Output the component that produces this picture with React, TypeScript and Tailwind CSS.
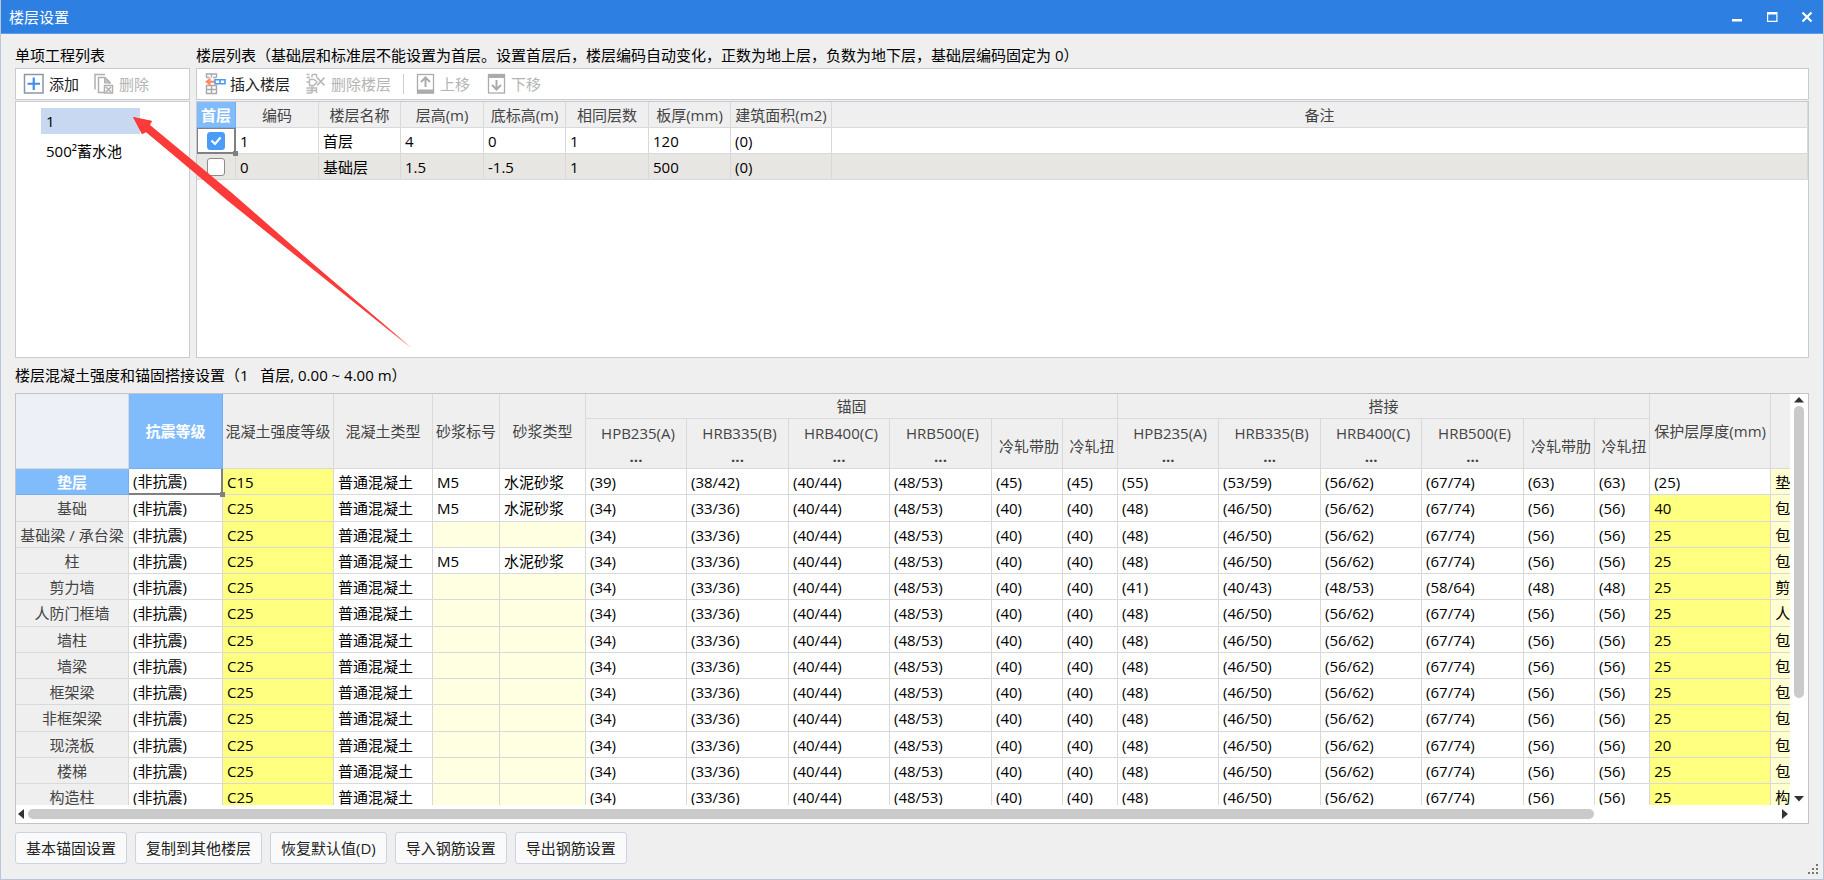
import React, { useState } from "react";

const BASE = {
  anchor: ["(34)", "(33/36)", "(40/44)", "(48/53)", "(40)", "(40)"],
  lap: ["(48)", "(46/50)", "(56/62)", "(67/74)", "(56)", "(56)"],
};

interface ComponentRow {
  name: string;
  grade?: string;
  mortar?: boolean;
  anchor?: string[];
  lap?: string[];
  cover?: string;
  note: string;
}

const ROWS: ComponentRow[] = [
  {
    name: "垫层",
    grade: "C15",
    mortar: true,
    anchor: ["(39)", "(38/42)", "(40/44)", "(48/53)", "(45)", "(45)"],
    lap: ["(55)", "(53/59)", "(56/62)", "(67/74)", "(63)", "(63)"],
    cover: "(25)",
    note: "垫层",
  },
  { name: "基础", mortar: true, cover: "40", note: "包含" },
  { name: "基础梁 / 承台梁", note: "包含" },
  { name: "柱", mortar: true, note: "包含" },
  {
    name: "剪力墙",
    lap: ["(41)", "(40/43)", "(48/53)", "(58/64)", "(48)", "(48)"],
    note: "剪力",
  },
  { name: "人防门框墙", note: "人防" },
  { name: "墙柱", note: "包含" },
  { name: "墙梁", note: "包含" },
  { name: "框架梁", note: "包含" },
  { name: "非框架梁", note: "包含" },
  { name: "现浇板", cover: "20", note: "包含" },
  { name: "楼梯", note: "包含" },
  { name: "构造柱", note: "构造" },
];

const FLOORS = [
  { code: "1", name: "首层", height: "4", bottom: "0", same: "1", slab: "120", area: "(0)" },
  { code: "0", name: "基础层", height: "1.5", bottom: "-1.5", same: "1", slab: "500", area: "(0)" },
];

const BARS = ["HPB235(A)", "HRB335(B)", "HRB400(C)", "HRB500(E)"];

const cell = "border-r border-b p-0";
const th = `${cell} border-[#d9d9d9] bg-[#efefef] font-normal text-[#444]`;
const thActive = `${cell} border-[#74aeee] bg-[#80bbfb] font-bold text-white`;
const td = "border-r border-b border-[#d9d9d9] py-0 pr-0 pl-1";

function ToolButton({
  icon,
  label,
  disabled,
}: {
  icon: React.ReactNode;
  label: string;
  disabled?: boolean;
}) {
  return (
    <button
      disabled={disabled}
      className="flex items-center gap-1 text-[#222] disabled:text-[#b4b4b4]"
    >
      {icon}
      {label}
    </button>
  );
}

const AddIcon = () => (
  <svg width="22" height="22" viewBox="0 0 22 22" fill="none">
    <rect x="1.5" y="1.5" width="18.500" height="18.500" stroke="#8a97a6" strokeWidth="1.5" />
    <path d="M10.750 4.500v12.500M4.500 10.750h12.500" stroke="#3f8fe8" strokeWidth="2.200" />
  </svg>
);

const RemoveIcon = () => (
  <svg width="22" height="22" viewBox="0 0 22 22" fill="none" stroke="#b0b0b0" strokeWidth="1.500">
    <path d="M2 16.500V1.500h10" />
    <path d="M11 19.500H5.500V4.500H12l5 5V11" />
    <path d="M11.500 4v6H17z" fill="#c4c4c4" strokeWidth="1" />
    <rect x="11.500" y="12.500" width="8" height="7.500" />
    <path d="M13 14l5 5M18 14l-5 5" />
  </svg>
);

const InsertFloorIcon = () => (
  <svg width="22" height="22" viewBox="0 0 22 22" fill="none">
    <path
      d="M2.500 4.500v-3.500h10v3.500M2.500 4.500h3M9 4.500h3.500M7.500 1v3.500M2.500 12.500h10v8h-10zM2.500 16.500h10M7.500 12.500v8"
      stroke="#a8a8a8"
      strokeWidth="1.400"
    />
    <path d="M4 8.750h6.500" stroke="#ff8a60" strokeWidth="2.200" />
    <path d="M6.500 4.500L1 8.750l5.500 4.250z" fill="#ff8a60" />
    <path d="M11 6.750h10v4H11zM16 6.750v4" stroke="#4a9bf0" strokeWidth="1.600" />
  </svg>
);

const DeleteFloorIcon = () => (
  <svg width="22" height="22" viewBox="0 0 22 22" fill="none" stroke="#b8b8b8" strokeWidth="1.400">
    <path d="M1.500 1.500h3M7 1.500h4.500v3M1.500 4.500H5M7 1.500v3" />
    <path d="M4.500 6.500h4.500l3 2.500-3 3.500H4.500zM1.500 9h3" />
    <path d="M1.500 15h10v5M1.500 20h5M7 13v7.500M1.500 17.500h10" />
    <path d="M12 4.500l7.500 8M19.500 4.500l-7.500 8" strokeWidth="1.800" />
  </svg>
);

const MoveIcon = ({ down }: { down?: boolean }) => (
  <svg width="20" height="22" viewBox="0 0 20 22" fill="none" stroke="#ababab">
    <rect x="1.500" y="1.500" width="16" height="18.500" strokeWidth="1.300" />
    {down ? (
      <>
        <path d="M1 1h17v4H1z" fill="#ababab" stroke="none" />
        <path d="M9.500 7v9.500M5 12l4.500 4.500 4.500-4.500" strokeWidth="2" />
      </>
    ) : (
      <>
        <path d="M1 16.500h17v4H1z" fill="#ababab" stroke="none" />
        <path d="M9.500 14V4.500M5 9l4.500-4.500L14 9" strokeWidth="2" />
      </>
    )}
  </svg>
);

function TitleBar() {
  const btn = "flex h-6 w-6 items-center justify-center";
  return (
    <header className="flex h-[34px] shrink-0 items-center justify-between border-b border-[#5b9bea] bg-[#2d7fe2] pr-1 pl-2 text-white">
      <h1>楼层设置</h1>
      <div className="flex gap-[11px]">
        <button aria-label="最小化" className={btn}>
          <svg width="12" height="12" viewBox="0 0 12 12">
            <path d="M1 8h10v2.500H1z" fill="#fff" />
          </svg>
        </button>
        <button aria-label="最大化" className={btn}>
          <svg width="12" height="12" viewBox="0 0 12 12">
            <path d="M1 1h10.500v10H1zM2.200 3.500v6.300h8.100V3.500z" fill="#fff" fillRule="evenodd" />
          </svg>
        </button>
        <button aria-label="关闭" className={btn}>
          <svg width="12" height="12" viewBox="0 0 12 12">
            <path d="M1.500 1.500l9 9M10.500 1.500l-9 9" stroke="#fff" strokeWidth="2.200" />
          </svg>
        </button>
      </div>
    </header>
  );
}

function ProjectPanel() {
  const [active, setActive] = useState("1");
  return (
    <section className="flex w-[175px] shrink-0 flex-col">
      <h2 className="h-6 leading-6">单项工程列表</h2>
      <div className="mt-px flex h-8 items-center gap-[14px] border border-[#c8ccd2] bg-white pl-[7px]">
        <ToolButton icon={<AddIcon />} label="添加" />
        <ToolButton icon={<RemoveIcon />} label="删除" disabled />
      </div>
      <ul className="mt-px h-[257px] border border-[#c8ccd2] bg-white pt-1.5 pl-[25px]">
        {["1", "500²蓄水池"].map((name) => (
          <li key={name} className="mb-1">
            <button
              onClick={() => setActive(name)}
              className={`h-[26px] w-[99px] pl-[5px] text-left whitespace-nowrap ${
                active === name ? "bg-[#c8d8f0]" : ""
              }`}
            >
              {name}
            </button>
          </li>
        ))}
      </ul>
    </section>
  );
}

function FloorPanel() {
  const [first, setFirst] = useState("1");
  return (
    <section className="flex min-w-0 flex-1 flex-col">
      <h2 className="h-6 leading-6 whitespace-nowrap">
        楼层列表（基础层和标准层不能设置为首层。设置首层后，楼层编码自动变化，正数为地上层，负数为地下层，基础层编码固定为 0）
      </h2>
      <div className="mt-px flex h-8 items-center border border-[#c8ccd2] bg-white pl-[7px]">
        <div className="flex gap-[15px]">
          <ToolButton icon={<InsertFloorIcon />} label="插入楼层" />
          <ToolButton icon={<DeleteFloorIcon />} label="删除楼层" disabled />
        </div>
        <div className="mx-3 h-5 w-px bg-[#cfcfcf]" />
        <div className="flex gap-[17px]">
          <ToolButton icon={<MoveIcon />} label="上移" disabled />
          <ToolButton icon={<MoveIcon down />} label="下移" disabled />
        </div>
      </div>
      <div className="mt-px h-[257px] border border-[#c8ccd2] bg-white">
        <table className="w-full table-fixed border-separate border-spacing-0">
          <colgroup>
            <col className="w-[39px]" />
            <col className="w-[83px]" />
            <col className="w-[82px]" />
            <col className="w-[83px]" />
            <col className="w-[82px]" />
            <col className="w-[83px]" />
            <col className="w-[82px]" />
            <col className="w-[101px]" />
            <col />
          </colgroup>
          <thead>
            <tr className="h-[26px]">
              <th className={thActive}>首层</th>
              {["编码", "楼层名称", "层高(m)", "底标高(m)", "相同层数", "板厚(mm)", "建筑面积(m2)", "备注"].map(
                (h) => (
                  <th key={h} className={th}>
                    {h}
                  </th>
                )
              )}
            </tr>
          </thead>
          <tbody>
            {FLOORS.map((f) => (
              <tr key={f.code} className="h-[26px] odd:bg-white even:bg-[#e7e6e2]">
                <td
                  className={
                    f.code === "1"
                      ? "relative border-t border-r-2 border-b-2 border-l border-[#808080] p-0"
                      : `${cell} border-[#d9d9d9]`
                  }
                >
                  <label className="flex justify-center">
                    <input
                      type="checkbox"
                      aria-label={`${f.name} 首层`}
                      checked={first === f.code}
                      onChange={() => setFirst(f.code)}
                      className="peer sr-only"
                    />
                    <span className="flex h-[18px] w-[18px] items-center justify-center rounded-[3px] border border-[#8c8c8c] bg-white peer-checked:border-[#4b9bfa] peer-checked:bg-[#4b9bfa]">
                      <svg width="12" height="10" viewBox="0 0 12 10" fill="none">
                        <path d="M1.500 4.500l3.500 3.500 5.500-6.500" stroke="#fff" strokeWidth="2.200" />
                      </svg>
                    </span>
                  </label>
                  {f.code === "1" && (
                    <span className="absolute -right-1 -bottom-1 z-10 h-[5px] w-[5px] bg-[#808080]" />
                  )}
                </td>
                {[f.code, f.name, f.height, f.bottom, f.same, f.slab, f.area, ""].map((v, i) => (
                  <td key={i} className={td}>
                    {v}
                  </td>
                ))}
              </tr>
            ))}
          </tbody>
        </table>
      </div>
    </section>
  );
}

function BarHeaders({ group }: { group: string }) {
  return (
    <>
      {BARS.map((b) => (
        <th key={group + b} className={th}>
          <div className="pl-1 leading-6">{b}</div>
          <div className="leading-[22px] font-bold">...</div>
        </th>
      ))}
      <th className={th}>
        <div className="pt-1 pl-1">冷轧带肋</div>
      </th>
      <th className={th}>
        <div className="pt-1 pl-1">冷轧扭</div>
      </th>
    </>
  );
}

function StrengthTable() {
  const yellow = "bg-[#ffff80]";
  const pale = "bg-[#ffffe1]";
  return (
    <table className="w-[1900px] table-fixed border-separate border-spacing-0 whitespace-nowrap">
      <colgroup>
        <col className="w-[113px]" />
        <col className="w-[94px]" />
        <col className="w-[111px]" />
        <col className="w-[99px]" />
        <col className="w-[67px]" />
        <col className="w-[86px]" />
        <col className="w-[101px]" />
        <col className="w-[102px]" />
        <col className="w-[101px]" />
        <col className="w-[102px]" />
        <col className="w-[71px]" />
        <col className="w-[55px]" />
        <col className="w-[101px]" />
        <col className="w-[102px]" />
        <col className="w-[101px]" />
        <col className="w-[102px]" />
        <col className="w-[71px]" />
        <col className="w-[55px]" />
        <col className="w-[121px]" />
        <col />
      </colgroup>
      <thead>
        <tr className="h-[25px]">
          <th rowSpan={2} className={`${cell} border-[#d9d9d9] bg-[#edf1f7]`} />
          <th rowSpan={2} className={thActive}>
            抗震等级
          </th>
          {["混凝土强度等级", "混凝土类型", "砂浆标号", "砂浆类型"].map((h) => (
            <th key={h} rowSpan={2} className={th}>
              {h}
            </th>
          ))}
          <th colSpan={6} className={th}>
            锚固
          </th>
          <th colSpan={6} className={th}>
            搭接
          </th>
          <th rowSpan={2} className={th}>
            保护层厚度(mm)
          </th>
          <th rowSpan={2} aria-label="备注" className={th} />
        </tr>
        <tr className="h-[50px]">
          <BarHeaders group="anchor" />
          <BarHeaders group="lap" />
        </tr>
      </thead>
      <tbody>
        {ROWS.map((r, i) => (
          <tr key={r.name} className="h-[26px] nth-[4n+2]:h-[27px]">
            <th className={i === 0 ? thActive : th}>{r.name}</th>
            <td
              className={
                i === 0
                  ? "relative border-r-2 border-b-2 border-[#808080] py-0 pr-0 pl-1"
                  : td
              }
            >
              (非抗震)
              {i === 0 && (
                <span className="absolute -right-1 -bottom-1 z-10 h-[5px] w-[5px] bg-[#808080]" />
              )}
            </td>
            <td className={`${td} ${yellow}`}>{r.grade ?? "C25"}</td>
            <td className={td}>普通混凝土</td>
            <td className={`${td} ${r.mortar ? "" : pale}`}>{r.mortar ? "M5" : ""}</td>
            <td className={`${td} ${r.mortar ? "" : pale}`}>{r.mortar ? "水泥砂浆" : ""}</td>
            {[...(r.anchor ?? BASE.anchor), ...(r.lap ?? BASE.lap)].map((v, n) => (
              <td key={n} className={td}>
                {v}
              </td>
            ))}
            <td className={`${td} ${i === 0 ? "" : yellow}`}>{r.cover ?? "25"}</td>
            <td className={`${td} bg-[#ffffcf]`}>{r.note}</td>
          </tr>
        ))}
      </tbody>
    </table>
  );
}

function StrengthPanel() {
  return (
    <div className="flex min-h-0 flex-1 flex-col border border-[#c4c4c4] bg-white">
      <div className="flex min-h-0 flex-1">
        <div className="min-w-0 flex-1 overflow-hidden">
          <StrengthTable />
        </div>
        <div className="flex w-[18px] shrink-0 flex-col items-center py-0.5">
          <svg width="10" height="8" viewBox="0 0 10 8">
            <path d="M0 6.500L5 1l5 5.500z" fill="#333" />
          </svg>
          <div className="mt-0.5 w-2.5 flex-1">
            <div className="h-3/4 rounded-full bg-[#cacaca]" />
          </div>
          <svg width="10" height="8" viewBox="0 0 10 8">
            <path d="M0 1l5 5.500L10 1z" fill="#333" />
          </svg>
        </div>
      </div>
      <div className="flex h-[18px] shrink-0 items-center gap-1 pr-5 pl-0.5">
        <svg width="6" height="10" viewBox="0 0 6 10">
          <path d="M6 0L0 5l6 5z" fill="#333" />
        </svg>
        <div className="h-2.5 flex-1 pr-[184px]">
          <div className="h-full rounded-full bg-[#cacaca]" />
        </div>
        <svg width="6" height="10" viewBox="0 0 6 10">
          <path d="M0 0l6 5-6 5z" fill="#333" />
        </svg>
      </div>
    </div>
  );
}

export default function App() {
  return (
    <div className="relative flex h-screen flex-col border-x border-b border-[#b9c5d8] bg-[#efefef] font-['Open_Sans','Noto_Sans_CJK_SC',sans-serif] text-[15px] leading-5 text-black">
      <TitleBar />
      <main className="flex min-h-0 flex-1 flex-col px-3.5 pt-[9px]">
        <div className="flex gap-1.5">
          <ProjectPanel />
          <FloorPanel />
        </div>
        <h2 className="h-[35px] leading-[35px] whitespace-pre">
          楼层混凝土强度和锚固搭接设置（1   首层, 0.00 ~ 4.00 m）
        </h2>
        <StrengthPanel />
        <footer className="flex shrink-0 gap-2 pt-2 pb-[15px]">
          {["基本锚固设置", "复制到其他楼层", "恢复默认值(D)", "导入钢筋设置", "导出钢筋设置"].map((b) => (
            <button
              key={b}
              className="h-8 rounded-[3px] border border-[#ccd3e0] bg-[#fafafa] px-[10px] text-[#222]"
            >
              {b}
            </button>
          ))}
        </footer>
      </main>

      {/* size grip */}
      <svg className="absolute right-1 bottom-1 text-[#777]" width="11" height="11" viewBox="0 0 11 11" fill="currentColor">
        <path d="M8 0h2v2H8zM8 4h2v2H8zM8 8h2v2H8zM4 4h2v2H4zM4 8h2v2H4zM0 8h2v2H0z" />
      </svg>

      {/* annotation arrow */}
      <svg
        className="pointer-events-none absolute top-[115px] left-[131px] z-20"
        width="284"
        height="236"
        viewBox="0 0 284 236"
      >
        <path d="M1 2L20 6 17 10 280 233 14 17 10 19z" fill="#fc3a3a" />
        <path d="M1 2L20 6 18 10 100 78 180 148 279 233 178 152 96 86 14 17 10 19z" fill="#fc3a3a" />
      </svg>
    </div>
  );
}
